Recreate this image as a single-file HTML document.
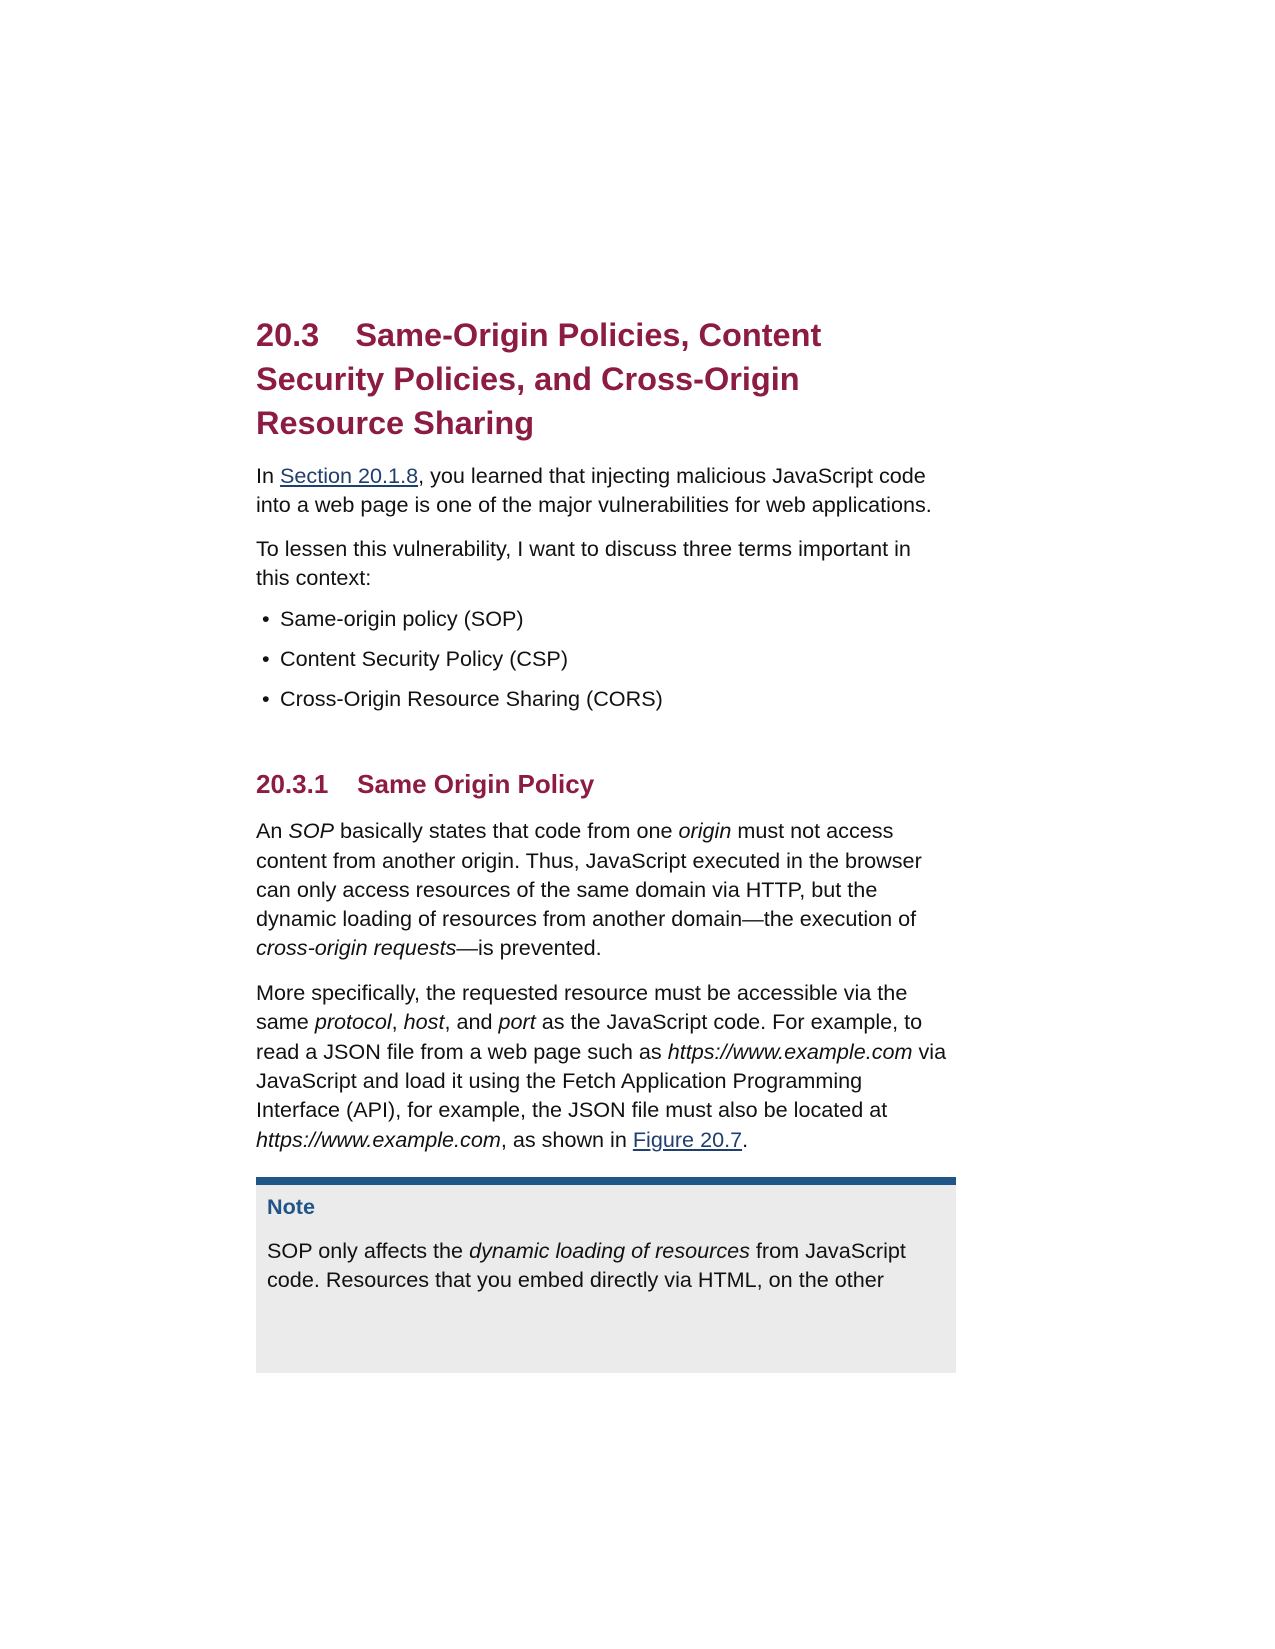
<!DOCTYPE html>
<html><head><meta charset="utf-8"><style>
body{margin:0;width:1275px;height:1649px;background:#fff;position:relative;font-family:"Liberation Sans",Arial,sans-serif;color:#111;}
.l{position:absolute;left:256px;white-space:nowrap;font-size:21.6px;height:30px;line-height:30px;}
.h{position:absolute;left:256px;white-space:nowrap;font-size:32.5px;font-weight:bold;color:#8c1c44;line-height:44px;}
.h2{position:absolute;left:256px;white-space:nowrap;font-size:26px;font-weight:bold;color:#8c1c44;line-height:30px;}
a{color:#1f3f6e;text-decoration:underline;}
.b{left:262px}
.bt{position:absolute;left:18px}
</style></head><body>
<div class="h" style="top:313px">20.3&nbsp;&nbsp;&nbsp;&nbsp;Same-Origin Policies, Content</div>
<div class="h" style="top:357px">Security Policies, and Cross-Origin</div>
<div class="h" style="top:401px">Resource Sharing</div>

<div class="l" style="top:461px">In <a>Section 20.1.8</a>, you learned that injecting malicious JavaScript code</div>
<div class="l" style="top:490px">into a web page is one of the major vulnerabilities for web applications.</div>
<div class="l" style="top:534px">To lessen this vulnerability, I want to discuss three terms important in</div>
<div class="l" style="top:563px">this context:</div>
<div class="l b" style="top:604px">•<span class="bt">Same-origin policy (SOP)</span></div>
<div class="l b" style="top:644px">•<span class="bt">Content Security Policy (CSP)</span></div>
<div class="l b" style="top:684px">•<span class="bt">Cross-Origin Resource Sharing (CORS)</span></div>

<div class="h2" style="top:769px">20.3.1&nbsp;&nbsp;&nbsp;&nbsp;Same Origin Policy</div>

<div class="l" style="top:816px">An <i>SOP</i> basically states that code from one <i>origin</i> must not access</div>
<div class="l" style="top:846px">content from another origin. Thus, JavaScript executed in the browser</div>
<div class="l" style="top:875px">can only access resources of the same domain via HTTP, but the</div>
<div class="l" style="top:904px">dynamic loading of resources from another domain—the execution of</div>
<div class="l" style="top:933px"><i>cross-origin requests</i>—is prevented.</div>

<div class="l" style="top:978px">More specifically, the requested resource must be accessible via the</div>
<div class="l" style="top:1007px">same <i>protocol</i>, <i>host</i>, and <i>port</i> as the JavaScript code. For example, to</div>
<div class="l" style="top:1037px">read a JSON file from a web page such as <i>https://www.example.com</i> via</div>
<div class="l" style="top:1066px">JavaScript and load it using the Fetch Application Programming</div>
<div class="l" style="top:1095px">Interface (API), for example, the JSON file must also be located at</div>
<div class="l" style="top:1125px"><i>https://www.example.com</i>, as shown in <a>Figure 20.7</a>.</div>

<div style="position:absolute;left:256px;top:1177px;width:700px;height:8px;background:#1f5588"></div>
<div style="position:absolute;left:256px;top:1185px;width:700px;height:188px;background:#ebebeb"></div>
<div class="l" style="left:267px;top:1192px;font-weight:bold;color:#1f5588">Note</div>
<div class="l" style="left:267px;top:1236px">SOP only affects the <i>dynamic loading of resources</i> from JavaScript</div>
<div class="l" style="left:267px;top:1265px">code. Resources that you embed directly via HTML, on the other</div>
</body></html>
